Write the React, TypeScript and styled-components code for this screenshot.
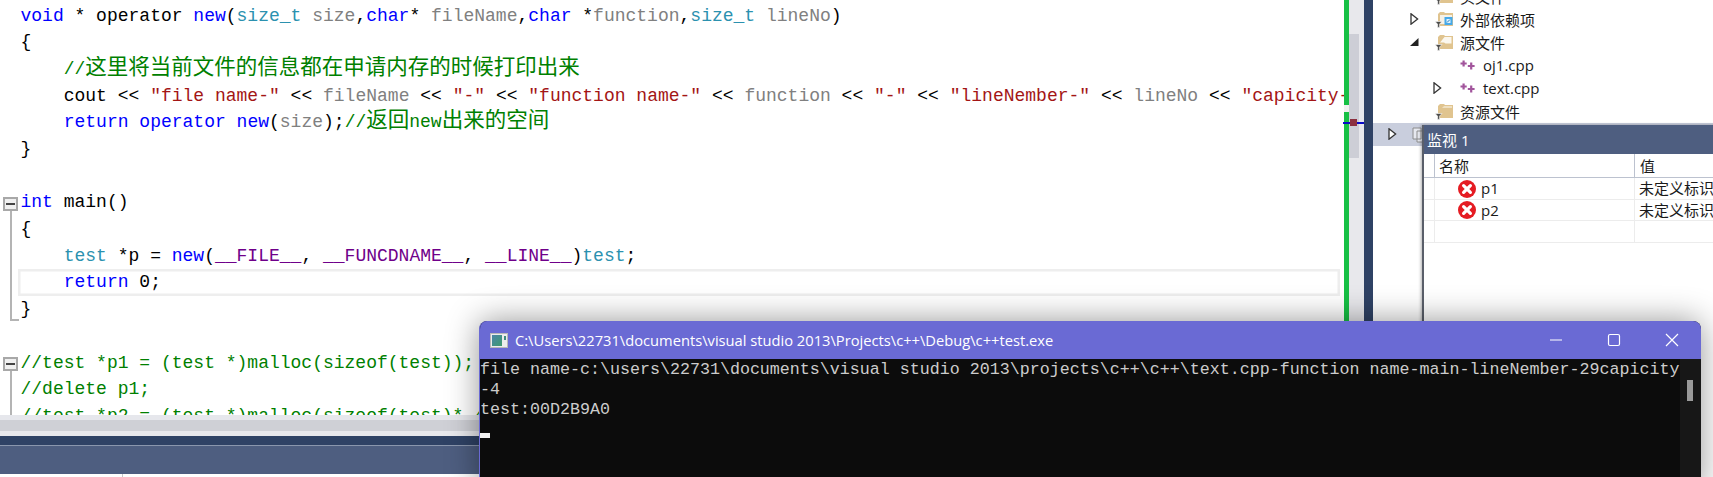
import styled, { createGlobalStyle } from 'styled-components';

const Global = createGlobalStyle`
html, body { margin: 0; padding: 0; background: #fff; }
body { width: 1713px; height: 477px; overflow: hidden; }
`;

const COLORS = {
  kw: '#0000ff',
  ty: '#2b91af',
  pa: '#808080',
  st: '#a31515',
  ma: '#6f008a',
  cm: '#008000',
};

const Page = styled.div`
  position: relative;
  display: flex;
  width: 1713px;
  height: 477px;
  overflow: hidden;
  background: #fff;
`;

const EditorColumn = styled.div`
  width: 1373px;
  height: 477px;
  display: flex;
  flex-direction: column;
  flex: none;
`;
const EditorRow = styled.div`
  height: 415px;
  display: flex;
  flex: none;
`;
const CodePane = styled.div`
  width: 1344px;
  flex: none;
  overflow: hidden;
  padding-top: 2.6px;
  box-sizing: border-box;
  font-family: 'Liberation Mono', 'Noto Sans CJK SC', monospace;
  font-size: 18px;
  color: #000;
`;
const Line = styled.div`
  height: 26.7px;
  display: flex;
`;
const Gutter = styled.div<{ $mark?: 'box' | 'bar' | 'end' }>`
  position: relative;
  width: 18px;
  flex: none;
  ${(p) =>
    p.$mark === 'bar' &&
    `&::before { content: ''; position: absolute; left: 10px; top: 0; bottom: 0; width: 2px; background: #b4b4b4; }`}
  ${(p) =>
    p.$mark === 'end' &&
    `&::before { content: ''; position: absolute; left: 10px; top: 0; height: 23px; width: 7px; border-left: 2px solid #b4b4b4; border-bottom: 2px solid #b4b4b4; }`}
  ${(p) =>
    p.$mark === 'box' &&
    `&::before { content: ''; position: absolute; left: 10px; top: 21px; bottom: 0; width: 2px; background: #b4b4b4; }`}
`;
const FoldBox = styled.span`
  position: absolute;
  left: 3px;
  top: 7.5px;
  width: 11px;
  height: 10px;
  border: 2px solid #a8a8a8;
  background: #f0f0f0;
  &::after {
    content: '';
    position: absolute;
    left: 1px;
    right: 1px;
    top: 4px;
    height: 2px;
    background: #444;
  }
`;
const Code = styled.div<{ $active?: boolean }>`
  flex: 1;
  min-width: 0;
  padding-left: 2.5px;
  line-height: 26.7px;
  white-space: pre;
  overflow: hidden;
  ${(p) => p.$active && `box-shadow: inset 0 0 0 2.5px #eeeeee; margin-right: 4px;`}
`;
const Tok = styled.span<{ $k: keyof typeof COLORS }>`
  color: ${(p) => COLORS[p.$k]};
`;
const Cjk = styled.span`
  font-family: 'Noto Sans CJK SC', sans-serif;
  font-size: 21.5px;
  line-height: 0;
`;

const ChangeBar = styled.div`
  position: relative;
  width: 5px;
  flex: none;
  background: linear-gradient(#17c045 0 105px, #f0f0f0 105px 112px, #17c045 112px);
`;
const ScrollTrack = styled.div`
  position: relative;
  width: 15px;
  flex: none;
  background: #e8e8ec;
`;
const ScrollThumb = styled.div`
  margin-top: 34px;
  width: 10px;
  height: 124px;
  background: #cdced6;
`;
const ScrollMark = styled.div`
  position: absolute;
  left: -6px;
  right: 0;
  top: 122px;
  height: 2px;
  background: #0a0ac8;
  &::after {
    content: '';
    position: absolute;
    left: 7px;
    top: -3px;
    width: 7px;
    height: 7px;
    background: #8c3040;
  }
`;
const DarkStrip = styled.div`
  width: 9px;
  flex: none;
  background: #2f4265;
`;

const ThinBar = styled.div<{ $h: number; $c: string }>`
  height: ${(p) => p.$h}px;
  background: ${(p) => p.$c};
  flex: none;
`;
const StatusBar = styled.div`
  height: 28px;
  flex: none;
  background: #4e5e80;
  border-top: 1px solid #8a96ad;
`;
const Footer = styled.div`
  flex: 1;
  position: relative;
  &::before {
    content: '';
    position: absolute;
    left: 122px;
    top: 0;
    bottom: 0;
    width: 1px;
    background: #c8c8c8;
  }
`;

const SidePanel = styled.div`
  position: relative;
  flex: 1;
  overflow: hidden;
  font-family: 'Open Sans', 'Noto Sans CJK SC', sans-serif;
  font-size: 15px;
  color: #1a1a1a;
`;
const Tree = styled.div`
  margin-top: -15.5px;
  display: flex;
  flex-direction: column;
`;
const TreeRow = styled.div<{ $indent: number; $selected?: boolean }>`
  height: 23px;
  display: flex;
  align-items: center;
  padding-left: ${(p) => p.$indent}px;
  background: ${(p) => (p.$selected ? '#c9cedd' : 'transparent')};
`;
const Arrow = styled.svg`
  width: 9px;
  height: 12px;
  flex: none;
`;
const ArrowSlot = styled.div<{ $w: number }>`
  width: ${(p) => p.$w}px;
  flex: none;
  display: flex;
  align-items: center;
`;
const RowIcon = styled.svg<{ $w: number; $gap: number }>`
  width: ${(p) => p.$w}px;
  height: 20px;
  flex: none;
  margin-right: ${(p) => p.$gap}px;
`;

const WatchWindow = styled.div`
  position: absolute;
  left: 49px;
  top: 125px;
  right: -20px;
  bottom: 0;
  background: #fff;
  border-left: 2px solid #5a5f6a;
  box-shadow: -1px 0 3px rgba(0, 0, 0, 0.3);
  display: flex;
  flex-direction: column;
`;
const WatchTitle = styled.div`
  height: 29px;
  flex: none;
  background: #4e5e80;
  color: #fff;
  padding-left: 3px;
  line-height: 30px;
  font-size: 15px;
`;
const WatchGrid = styled.div<{ $head?: boolean }>`
  display: grid;
  grid-template-columns: 10px 200px 1fr;
  height: ${(p) => (p.$head ? 24 : 21.5)}px;
  flex: none;
  line-height: ${(p) => (p.$head ? 24 : 21)}px;
  border-bottom: 1px solid ${(p) => (p.$head ? '#bcc2cf' : '#ececec')};
  box-sizing: border-box;
  white-space: nowrap;
  overflow: hidden;
`;
const WatchCell = styled.div<{ $pad: number; $line?: boolean }>`
  padding-left: ${(p) => p.$pad}px;
  border-left: 1px solid ${(p) => (p.$line ? '#bcc2cf' : '#ececec')};
  display: flex;
  align-items: center;
  gap: 5px;
`;
const ErrorIcon = styled.svg`
  width: 18px;
  height: 18px;
  flex: none;
`;

const ConsoleWindow = styled.div`
  position: absolute;
  left: 479px;
  top: 321px;
  width: 1222px;
  height: 170px;
  border-radius: 8px 8px 0 0;
  background: #0c0c0c;
  box-shadow: 0 0 32px rgba(0, 0, 0, 0.42);
  overflow: hidden;
  display: flex;
  flex-direction: column;
  border-left: 1px solid #6a6ad4;
  box-sizing: border-box;
`;
const ConsoleTitle = styled.div`
  height: 38px;
  flex: none;
  background: #6a6ad4;
  color: #fff;
  display: flex;
  align-items: center;
  padding-left: 10px;
  font-family: 'Open Sans', 'Noto Sans', sans-serif;
  font-size: 14.7px;
`;
const TitleText = styled.span`
  flex: 1;
  margin-left: 7px;
  white-space: nowrap;
`;
const WinButton = styled.svg`
  width: 58px;
  height: 14px;
  flex: none;
`;
const ConsoleBody = styled.div`
  flex: 1;
  display: flex;
  min-height: 0;
`;
const ConsoleText = styled.div`
  flex: 1;
  padding-top: 1px;
  color: #cccccc;
  font-family: 'Liberation Mono', monospace;
  font-size: 16.67px;
  line-height: 20px;
  white-space: pre;
  overflow: hidden;
`;
const Cursor = styled.div`
  width: 10px;
  height: 5px;
  margin-top: 13px;
  background: #f2f2f2;
`;
const ConsoleScroll = styled.div`
  width: 21px;
  flex: none;
  background: #171717;
  padding: 21px 0 0 7px;
  box-sizing: border-box;
`;
const ConsoleThumb = styled.div`
  width: 6px;
  height: 21px;
  background: #9b9b9b;
`;

function Funnel() {
  return <path d="M0 12.5h7L4.6 15v3.4H2.6V15z" fill="#4c4c4c" stroke="#fff" strokeWidth="0.6" />;
}

// solid, open (white corner) and link (blue badge) are the three folder looks in the tree
function FolderIcon({ kind = 'solid' }: { kind?: 'solid' | 'open' | 'link' }) {
  return (
    <RowIcon $w={18} $gap={7} viewBox="0 0 18 20">
      <path d="M3 5l2-2h4l1 1h8v13H3z" fill="#e0c48f" />
      {kind === 'solid' && <path d="M9 5h8v2H7z" fill="#efe0c2" />}
      {kind === 'open' && <path d="M5 10.5 9.5 5h7v6.5h-6L9 10.5z" fill="#fbf7ee" />}
      {kind === 'link' && <path d="M5 6h12v9H5z" fill="#f6f1e6" />}
      {kind === 'link' && <rect x="9.5" y="8" width="8" height="8" fill="#45a9ea" />}
      {kind === 'link' && <path d="M11.5 10h4v4h-4z" fill="#dff1fc" />}
      {kind === 'link' && <path d="M12 13.5l3-3" stroke="#1f7fc0" strokeWidth="1" />}
      <Funnel />
    </RowIcon>
  );
}

function CppIcon() {
  return (
    <RowIcon $w={15} $gap={8} viewBox="0 0 15 20">
      <path d="M.5 8.5h6.2M3.6 5.4v6.2M7.8 11h6.8M11.2 7.6v6.8" stroke="#a2559c" strokeWidth="2.2" fill="none" />
    </RowIcon>
  );
}

function Closed() {
  return (
    <Arrow viewBox="0 0 9 12">
      <path d="M1 .8 7.6 6 1 11.2z" fill="#fff" stroke="#333" strokeWidth="1.3" />
    </Arrow>
  );
}

function Opened() {
  return (
    <Arrow viewBox="0 0 9 12">
      <path d="M0 10h8.5V2z" fill="#222" />
    </Arrow>
  );
}

function ErrorMark() {
  return (
    <ErrorIcon viewBox="0 0 18 18">
      <circle cx="9" cy="9" r="9" fill="#e51c23" />
      <path d="M5.6 5.6l6.8 6.8M12.4 5.6l-6.8 6.8" stroke="#fff" strokeWidth="3.2" strokeLinecap="round" />
    </ErrorIcon>
  );
}

export default function App() {
  return (
    <Page>
      <Global />
      <EditorColumn>
        <EditorRow>
          <CodePane>
            <Line>
              <Gutter />
              <Code>
                <Tok $k="kw">void</Tok> * operator <Tok $k="kw">new</Tok>(<Tok $k="ty">size_t</Tok>{' '}
                <Tok $k="pa">size</Tok>,<Tok $k="kw">char</Tok>* <Tok $k="pa">fileName</Tok>,<Tok $k="kw">char</Tok> *
                <Tok $k="pa">function</Tok>,<Tok $k="ty">size_t</Tok> <Tok $k="pa">lineNo</Tok>)
              </Code>
            </Line>
            <Line>
              <Gutter />
              <Code>{'{'}</Code>
            </Line>
            <Line>
              <Gutter />
              <Code>
                {'    '}
                <Tok $k="cm">
                  //<Cjk>这里将当前文件的信息都在申请内存的时候打印出来</Cjk>
                </Tok>
              </Code>
            </Line>
            <Line>
              <Gutter />
              <Code>
                {'    '}cout {'<<'} <Tok $k="st">"file name-"</Tok> {'<<'} <Tok $k="pa">fileName</Tok> {'<<'}{' '}
                <Tok $k="st">"-"</Tok> {'<<'} <Tok $k="st">"function name-"</Tok> {'<<'} <Tok $k="pa">function</Tok>{' '}
                {'<<'} <Tok $k="st">"-"</Tok> {'<<'} <Tok $k="st">"lineNember-"</Tok> {'<<'} <Tok $k="pa">lineNo</Tok>{' '}
                {'<<'} <Tok $k="st">"capicity-"</Tok>
              </Code>
            </Line>
            <Line>
              <Gutter />
              <Code>
                {'    '}
                <Tok $k="kw">return</Tok> <Tok $k="kw">operator</Tok> <Tok $k="kw">new</Tok>(<Tok $k="pa">size</Tok>);
                <Tok $k="cm">
                  //<Cjk>返回</Cjk>new<Cjk>出来的空间</Cjk>
                </Tok>
              </Code>
            </Line>
            <Line>
              <Gutter />
              <Code>{'}'}</Code>
            </Line>
            <Line />
            <Line>
              <Gutter $mark="box">
                <FoldBox />
              </Gutter>
              <Code>
                <Tok $k="kw">int</Tok> main()
              </Code>
            </Line>
            <Line>
              <Gutter $mark="bar" />
              <Code>{'{'}</Code>
            </Line>
            <Line>
              <Gutter $mark="bar" />
              <Code>
                {'    '}
                <Tok $k="ty">test</Tok> *p = <Tok $k="kw">new</Tok>(<Tok $k="ma">__FILE__</Tok>, <Tok $k="ma">__FUNCDNAME__</Tok>,{' '}
                <Tok $k="ma">__LINE__</Tok>)<Tok $k="ty">test</Tok>;
              </Code>
            </Line>
            <Line>
              <Gutter $mark="bar" />
              <Code $active>
                {'    '}
                <Tok $k="kw">return</Tok> 0;
              </Code>
            </Line>
            <Line>
              <Gutter $mark="end" />
              <Code>{'}'}</Code>
            </Line>
            <Line />
            <Line>
              <Gutter $mark="box">
                <FoldBox />
              </Gutter>
              <Code>
                <Tok $k="cm">//test *p1 = (test *)malloc(sizeof(test));</Tok>
              </Code>
            </Line>
            <Line>
              <Gutter $mark="bar" />
              <Code>
                <Tok $k="cm">//delete p1;</Tok>
              </Code>
            </Line>
            <Line>
              <Gutter $mark="bar" />
              <Code>
                <Tok $k="cm">//test *p2 = (test *)malloc(sizeof(test)* 4);</Tok>
              </Code>
            </Line>
          </CodePane>
          <ChangeBar />
          <ScrollTrack>
            <ScrollThumb />
            <ScrollMark />
          </ScrollTrack>
          <DarkStrip />
        </EditorRow>
        <ThinBar $h={5} $c="#e6e7ec" />
        <ThinBar $h={11} $c="#cfd0d6" />
        <ThinBar $h={5} $c="#e8e8ec" />
        <ThinBar $h={9} $c="#2f4265" />
        <StatusBar />
        <Footer />
      </EditorColumn>

      <SidePanel>
        <Tree>
          <TreeRow $indent={62}>
            <FolderIcon />头文件
          </TreeRow>
          <TreeRow $indent={37}>
            <ArrowSlot $w={25}>
              <Closed />
            </ArrowSlot>
            <FolderIcon kind="link" />外部依赖项
          </TreeRow>
          <TreeRow $indent={37}>
            <ArrowSlot $w={25}>
              <Opened />
            </ArrowSlot>
            <FolderIcon kind="open" />源文件
          </TreeRow>
          <TreeRow $indent={87}>
            <CppIcon />oj1.cpp
          </TreeRow>
          <TreeRow $indent={60}>
            <ArrowSlot $w={27}>
              <Closed />
            </ArrowSlot>
            <CppIcon />text.cpp
          </TreeRow>
          <TreeRow $indent={62}>
            <FolderIcon />资源文件
          </TreeRow>
          <TreeRow $indent={15} $selected>
            <ArrowSlot $w={24}>
              <Closed />
            </ArrowSlot>
            <RowIcon $w={14} $gap={0} viewBox="0 0 14 20">
              <path d="M1 4h8v11H1zM5 7h8v11H5z" fill="#e6e8ef" stroke="#8c8c8c" />
            </RowIcon>
          </TreeRow>
        </Tree>
        <WatchWindow>
          <WatchTitle>监视 1</WatchTitle>
          <WatchGrid $head>
            <span />
            <WatchCell $pad={4} $line>
              名称
            </WatchCell>
            <WatchCell $pad={5} $line>
              值
            </WatchCell>
          </WatchGrid>
          <WatchGrid>
            <span />
            <WatchCell $pad={23}>
              <ErrorMark />
              p1
            </WatchCell>
            <WatchCell $pad={4}>未定义标识符</WatchCell>
          </WatchGrid>
          <WatchGrid>
            <span />
            <WatchCell $pad={23}>
              <ErrorMark />
              p2
            </WatchCell>
            <WatchCell $pad={4}>未定义标识符</WatchCell>
          </WatchGrid>
          <WatchGrid>
            <span />
            <WatchCell $pad={4} />
            <WatchCell $pad={4} />
          </WatchGrid>
        </WatchWindow>
      </SidePanel>

      <ConsoleWindow>
        <ConsoleTitle>
          <svg width="18" height="15" viewBox="0 0 18 15">
            <defs>
              <linearGradient id="consoleIcon" x1="0" y1="0" x2="1" y2="1">
                <stop offset="0" stopColor="#4a86a8" />
                <stop offset="1" stopColor="#3f9a6e" />
              </linearGradient>
            </defs>
            <rect x="0.5" y="0.5" width="17" height="14" fill="#ececec" stroke="#b8b8b8" />
            <rect x="2" y="2" width="10" height="11" fill="url(#consoleIcon)" />
            <rect x="14" y="3" width="2" height="4" fill="#3f8a80" />
          </svg>
          <TitleText>C:\Users\22731\documents\visual studio 2013\Projects\c++\Debug\c++test.exe</TitleText>
          <WinButton viewBox="0 0 58 14">
            <path d="M23 7h12" stroke="#fff" strokeWidth="1.2" />
          </WinButton>
          <WinButton viewBox="0 0 58 14">
            <rect x="23.5" y="1.5" width="11" height="11" rx="1.5" fill="none" stroke="#fff" strokeWidth="1.2" />
          </WinButton>
          <WinButton viewBox="0 0 58 14">
            <path d="M23 1l12 12M35 1L23 13" stroke="#fff" strokeWidth="1.2" />
          </WinButton>
        </ConsoleTitle>
        <ConsoleBody>
          <ConsoleText>
            {'file name-c:\\users\\22731\\documents\\visual studio 2013\\projects\\c++\\c++\\text.cpp-function name-main-lineNember-29capicity\n-4\ntest:00D2B9A0\n'}
            <Cursor />
          </ConsoleText>
          <ConsoleScroll>
            <ConsoleThumb />
          </ConsoleScroll>
        </ConsoleBody>
      </ConsoleWindow>
    </Page>
  );
}
